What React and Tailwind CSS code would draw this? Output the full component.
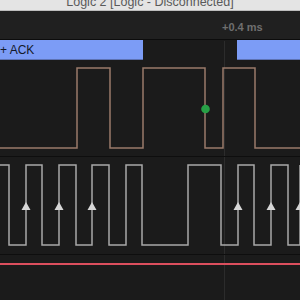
const BROWN = [[0, 148], [77, 148], [77, 68], [110, 68], [110, 148], [143, 148], [143, 68], [205, 68], [205, 148], [223, 148], [223, 68], [255, 68], [255, 148], [300, 148]]

const GRAY_EDGES = [9, 26, 42, 59, 76, 92, 109, 126, 142, 188, 221, 238, 254, 271, 288, 300]
const ARROWS = [26, 59, 92, 238, 271, 300]

function grayPoints() {
  let pts = [[0, 8]]
  let high = true
  for (const x of GRAY_EDGES) {
    const y = high ? 8 : 88
    pts.push([x, y])
    high = !high
    pts.push([x, high ? 8 : 88])
  }
  return pts.map(p => p.join(',')).join(' ')
}

export default function App() {
  return (
    <div className="w-[300px] h-[300px] overflow-hidden bg-[#1b1b1b] flex flex-col relative font-['Liberation_Sans',Arial,sans-serif]">

      {/* window title */}
      <div className="h-[11px] bg-[#e4e4e4] border-b border-[#bdbdbd] flex justify-center overflow-hidden">
        <span className="text-[12.5px] leading-[13px] -mt-[4px] text-[#5a5a5a] whitespace-nowrap">
          Logic 2 [Logic - Disconnected]
        </span>
      </div>

      {/* time ruler */}
      <div className="h-[29px] bg-[#202020] border-b border-[#0c0c0c] relative">
        <span className="absolute left-[222px] top-[11px] text-[11px] leading-[11px] font-bold text-[#6f6f6f]">+0.4 ms</span>
      </div>

      {/* protocol row */}
      <div className="h-[20px] flex">
        <div className="w-[143px] bg-[#7c9cf6] border-b border-[#5d72b3] flex items-center">
          <span className="text-[12px] leading-none text-[#141a2a]">+ ACK</span>
        </div>
        <div className="w-[94px]" />
        <div className="flex-1 bg-[#7c9cf6] border-b border-[#5d72b3]" />
      </div>

      {/* cursor, behind the traces */}
      <div className="absolute left-[224px] top-[41px] bottom-0 w-px bg-[#2c2c2c]" />

      {/* channel 0 */}
      <div className="h-[97px] border-b border-[#0e0e0e] relative">
        <svg width="300" height="97" viewBox="0 60 300 97" className="block">
          <polyline points={BROWN.map(p => p.join(',')).join(' ')} fill="none" stroke="#9a7b6b" strokeWidth="1.5" />
          <circle cx="205.5" cy="109" r="4.3" fill="#27a046" />
        </svg>
      </div>

      {/* channel 1 */}
      <div className="h-[98px] border-b border-[#0e0e0e] relative">
        <svg width="300" height="97" viewBox="0 0 300 97" className="block">
          <polyline points={grayPoints()} fill="none" stroke="#a9a9a9" strokeWidth="1.5" />
          {ARROWS.map(x => (
            <polygon key={x} points={`${x},45 ${x - 4.5},53 ${x + 4.5},53`} fill="#d6d6d6" />
          ))}
        </svg>
      </div>

      <div className="h-[8px]" />
      <div className="h-[2px] bg-[#dc4f5e] relative" />
      <div className="flex-1" />
    </div>
  )
}
